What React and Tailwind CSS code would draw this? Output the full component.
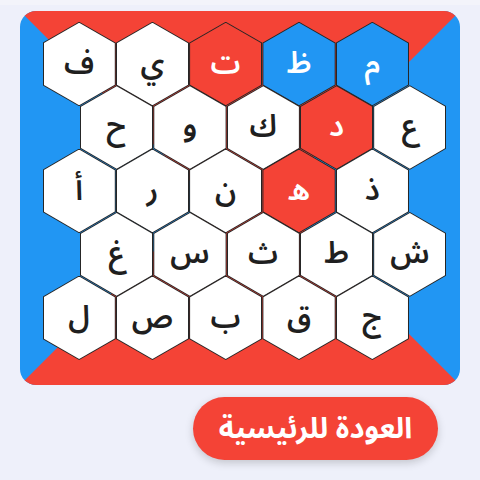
const RED = 'bg-[#f44336]'
const BLUE = 'bg-[#2196f3]'

// visual order, left to right
const rows = [
  [['ف'], ['ي'], ['ت', 'red'], ['ظ', 'blue'], ['م', 'blue']],
  [['ح'], ['و'], ['ك'], ['د', 'red'], ['ع']],
  [['أ'], ['ر'], ['ن'], ['ه', 'red'], ['ذ']],
  [['غ'], ['س'], ['ث'], ['ط'], ['ش']],
  [['ل'], ['ص'], ['ب'], ['ق'], ['ج']],
]

const hexClip = '[clip-path:polygon(50%_0,100%_25%,100%_75%,50%_100%,0_75%,0_25%)]'

function Hex({ letter, color }) {
  const fill = color === 'red' ? RED : color === 'blue' ? BLUE : 'bg-white'
  const text = color ? 'text-white' : 'text-[#1f1f1f]'
  return (
    <div className={`w-[73.3px] h-[84.6px] bg-[#262626] p-[1px] ${hexClip}`}>
      <div className={`w-full h-full flex items-center justify-center ${fill} ${hexClip}`}>
        <span className={`text-[30px] leading-none font-semibold ${text}`}>{letter}</span>
      </div>
    </div>
  )
}

export default function App() {
  return (
    <div
      className="w-[480px] h-[480px] bg-[#eef0fa] overflow-hidden"
      style={{ fontFamily: '"Noto Sans Arabic", "Noto Sans", "DejaVu Sans", sans-serif' }}
    >
      <div className="h-[5px] bg-[#f3f4fa]" />
      <div className={`relative ml-[20px] mt-[6px] w-[440px] h-[374px] rounded-[16px] overflow-hidden ${BLUE}`}>
        {/* board background wedges */}
        <div className={`absolute inset-0 ${RED} [clip-path:polygon(0_0,100%_0,253px_187px,187px_187px)]`} />
        <div className={`absolute inset-0 ${RED} [clip-path:polygon(0_100%,100%_100%,253px_187px,187px_187px)]`} />

        <div className="relative pt-[10.7px] flex flex-col">
          {rows.map((row, i) => (
            <div
              key={i}
              className={`flex ${i % 2 === 0 ? 'pl-[22.5px]' : 'pl-[60px]'} ${i > 0 ? '-mt-[21.15px]' : ''}`}
            >
              {row.map(([l, c], j) => (
                <Hex key={j} letter={l} color={c} />
              ))}
            </div>
          ))}
        </div>
      </div>

      <div className="flex justify-end pr-[42px] mt-[12px]">
        <button
          dir="rtl"
          className={`w-[245px] h-[63px] rounded-full ${RED} text-white text-[29px] font-bold leading-none shadow-[0_3px_8px_rgba(0,0,0,0.18)]`}
        >
          العودة للرئيسية
        </button>
      </div>
    </div>
  )
}
